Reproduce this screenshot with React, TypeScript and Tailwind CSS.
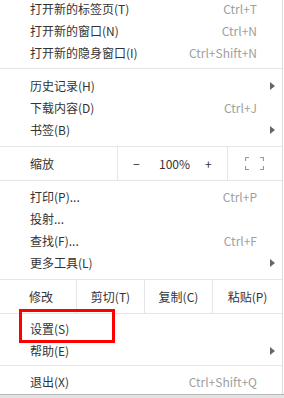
import React from "react";

const font = { fontFamily: '"Noto Sans CJK SC", "Noto Sans", sans-serif' };

function Arrow() {
  return (
    <svg width="5" height="8" viewBox="0 0 5 8" className="absolute left-[270px] top-1/2 -translate-y-1/2">
      <path d="M0 0 L5 4 L0 8 Z" fill="#666" />
    </svg>
  );
}

function Item({ label, shortcut, arrow }: { label: string; shortcut?: string; arrow?: boolean }) {
  return (
    <div className="relative flex h-[22px] items-center pl-[30px] pr-[25px]">
      <span className="text-[12px] text-[#333]">{label}</span>
      <span className="ml-auto text-[12px] text-[#a0a0a0]">{shortcut}</span>
      {arrow && <Arrow />}
    </div>
  );
}

function Sep() {
  return <div className="h-px bg-[#e6e6e6]" />;
}

export default function App() {
  return (
    <div className="relative h-[398px] w-[284px] overflow-hidden bg-white" style={font}>
      <div className="flex h-[394px] w-[283px] flex-col border-r border-[#dcdcdc]">
        <div className="-mt-[2px] pb-[4px]">
          <Item label="打开新的标签页(T)" shortcut="Ctrl+T" />
          <Item label="打开新的窗口(N)" shortcut="Ctrl+N" />
          <Item label="打开新的隐身窗口(I)" shortcut="Ctrl+Shift+N" />
        </div>
        <Sep />
        <div className="pt-[6px] pb-[5px]">
          <Item label="历史记录(H)" arrow />
          <Item label="下载内容(D)" shortcut="Ctrl+J" />
          <Item label="书签(B)" arrow />
        </div>
        <Sep />
        <div className="flex h-[33px] items-stretch">
          <div className="flex w-[118px] items-center border-r border-[#e6e6e6] pl-[30px] text-[12px] text-[#333]">
            缩放
          </div>
          <div className="relative flex w-[110px] items-center border-r border-[#e6e6e6] text-[12px] text-[#333]">
            <span className="absolute left-[15px]">−</span>
            <span className="absolute left-[41px]">100%</span>
            <span className="absolute left-[87px]">+</span>
          </div>
          <div className="flex flex-1 items-center justify-center pr-[2px]">
            <svg width="19" height="13" viewBox="0 0 19 13">
              <path
                d="M0.5 4 V0.5 H4 M15 0.5 H18.5 V4 M18.5 9 V12.5 H15 M4 12.5 H0.5 V9"
                fill="none"
                stroke="#999"
                strokeWidth="1.2"
              />
            </svg>
          </div>
        </div>
        <Sep />
        <div className="pt-[5px] pb-[5px]">
          <Item label="打印(P)..." shortcut="Ctrl+P" />
          <Item label="投射..." />
          <Item label="查找(F)..." shortcut="Ctrl+F" />
          <Item label="更多工具(L)" arrow />
        </div>
        <Sep />
        <div className="flex h-[33px] items-stretch text-[12px] text-[#333]">
          <div className="flex w-[77px] items-center border-r border-[#e6e6e6] pl-[29px]">修改</div>
          <div className="flex w-[68px] items-center justify-center border-r border-[#e6e6e6]">剪切(T)</div>
          <div className="flex w-[68px] items-center justify-center border-r border-[#e6e6e6]">复制(C)</div>
          <div className="flex flex-1 items-center justify-center">粘贴(P)</div>
        </div>
        <Sep />
        <div className="pt-[4px] pb-[3px]">
          <Item label="设置(S)" />
          <Item label="帮助(E)" arrow />
        </div>
        <Sep />
        <div className="pt-[5px]">
          <Item label="退出(X)" shortcut="Ctrl+Shift+Q" />
        </div>
      </div>
      <div className="h-px bg-[#b8b8b8]" />
      <div className="h-[3px] bg-[#e4e4e4]" />
      <div className="absolute left-[19px] top-[309px] h-[34px] w-[96px] border-[3px] border-[#ff0000]" />
    </div>
  );
}
